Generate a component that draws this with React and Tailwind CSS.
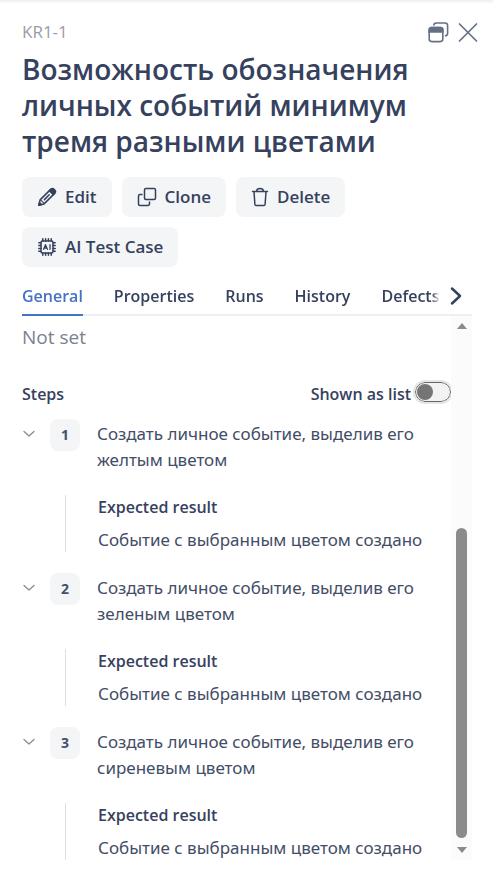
import React from "react";

const steps = [
  { id: 1, text: "Создать личное событие, выделив его желтым цветом" },
  { id: 2, text: "Создать личное событие, выделив его зеленым цветом" },
  { id: 3, text: "Создать личное событие, выделив его сиреневым цветом" },
];

const tabs = ["General", "Properties", "Runs", "History", "Defects"];

function RestoreIcon() {
  return (
    <svg width="22" height="22" viewBox="0 0 22 22" fill="none" stroke="#657086" strokeWidth="1.600" aria-hidden="true">
      <path d="M5.800 4.600c0-1.600.9-2.600 2.500-2.600h8.700a2.600 2.600 0 0 1 2.600 2.600v7.800a2.400 2.400 0 0 1-2.400 2.400h-.4" />
      <rect x="1.200" y="6.600" width="13.600" height="14" rx="2.500" />
      <path d="M1.200 11V9.100a2.500 2.500 0 0 1 2.500-2.500h8.600a2.500 2.500 0 0 1 2.500 2.500V11z" fill="#657086" />
    </svg>
  );
}

function CloseIcon() {
  return (
    <svg width="20" height="20" viewBox="0 0 20 20" fill="none" stroke="#657086" strokeWidth="1.700" strokeLinecap="round" aria-hidden="true">
      <path d="M1.500 2l17 17M18.500 2l-17 17" />
    </svg>
  );
}

function PencilIcon() {
  return (
    <svg width="20" height="20" viewBox="0 0 20 20" fill="none" stroke="#36415e" strokeWidth="1.500" strokeLinejoin="round" strokeLinecap="round" aria-hidden="true">
      <path d="M1.800 18.200l1.300-5.300L13.400 2.600a2.200 2.200 0 0 1 3.100 0l.9.900a2.200 2.200 0 0 1 0 3.100L7.100 16.900z" />
      <path d="M12.300 3.700l1.900-1.700a2 2 0 0 1 2.600 0l1.200 1.200a2 2 0 0 1 0 2.600l-1.700 1.900z" fill="#36415e" />
      <path d="M7.400 12.600l4.800-4.800" strokeWidth="1.500" />
      <path d="M3.600 12.800l3.600 3.600" strokeWidth="1.100" />
      <path d="M1.800 18.200l.7-2.700 2 2z" fill="#36415e" />
    </svg>
  );
}

function CloneIcon() {
  return (
    <svg width="20" height="20" viewBox="0 0 20 20" fill="none" stroke="#36415e" strokeWidth="1.500" strokeLinejoin="round" aria-hidden="true">
      <rect x="7.500" y="1.500" width="11" height="11" rx="1.500" />
      <path d="M5.500 7.500h-2.500a1.500 1.500 0 0 0-1.500 1.500v8a1.500 1.500 0 0 0 1.500 1.500h8a1.500 1.500 0 0 0 1.500-1.500v-2.500" />
    </svg>
  );
}

function TrashIcon() {
  return (
    <svg width="18" height="20" viewBox="0 0 18 20" fill="none" stroke="#36415e" strokeWidth="1.500" strokeLinejoin="round" strokeLinecap="round" aria-hidden="true">
      <path d="M1.500 4.500h15M5.500 4.300c.2-1.800 1.300-2.800 3.500-2.800s3.300 1 3.500 2.800M3 4.700l.9 12.700c.1.700.5 1.100 1.100 1.100h8c.6 0 1-.4 1.100-1.100L15 4.700" />
    </svg>
  );
}

function ChipIcon() {
  return (
    <svg width="20" height="20" viewBox="0 0 20 20" fill="none" stroke="#36415e" strokeWidth="1.500" strokeLinecap="round" strokeLinejoin="round" aria-hidden="true">
      <rect x="4" y="4" width="12" height="12" rx="1.500" />
      <path d="M5.800 1.800V4M8.600 1.800V4M11.400 1.800V4M14.200 1.800V4M5.800 16v2.200M8.600 16v2.200M11.400 16v2.200M14.200 16v2.200M1.800 5.800H4M1.800 8.600H4M1.800 11.400H4M1.800 14.200H4M16 5.800h2.200M16 8.600h2.200M16 11.400h2.200M16 14.200h2.200" />
      <path d="M6.600 12.300l1.900-4.600 1.900 4.600M7.300 11h2.400M13 7.700v4.600" strokeWidth="1.300" />
    </svg>
  );
}

function ActionButton({ icon, children }) {
  return (
    <button
      type="button"
      className="flex h-10 items-center gap-2 rounded-lg bg-[#f3f5f7] px-[15px] text-[17px] font-semibold text-[#36415e]"
    >
      {icon}
      {children}
    </button>
  );
}

function Step({ id, text }) {
  return (
    <li className="pb-[21px]">
      <div className="flex items-start">
        <button type="button" aria-label={`Collapse step ${id}`} className="flex h-[30px] w-7 items-center">
          <svg width="14" height="8" viewBox="0 0 14 8" fill="none" stroke="#858d9b" strokeWidth="1.300" strokeLinecap="round" strokeLinejoin="round" aria-hidden="true">
            <path d="M2 1.500l5 4.500 5-4.500" />
          </svg>
        </button>
        <span className="flex h-8 w-[30px] items-center justify-center rounded-lg bg-[#f3f5f7] text-sm leading-5 font-bold text-[#465069]">
          {id}
        </span>
        <p className="ml-[17px] min-w-0 flex-1 pt-0.5 pr-4 font-['Noto_Sans',sans-serif] text-[17px] leading-[26px]">{text}</p>
      </div>
      <div className="mt-[22px] ml-[43px] border-l border-[#dcdfe4] pl-8">
        <h3 className="text-base leading-6 font-semibold text-[#36415e]">Expected result</h3>
        <p className="mt-2 font-['Noto_Sans',sans-serif] text-[17px] leading-[25px] whitespace-nowrap">Событие с выбранным цветом создано</p>
      </div>
    </li>
  );
}

export default function App() {
  return (
    <main className="flex h-screen flex-col overflow-hidden bg-white pb-3 pl-[22px] font-['Open_Sans','Noto_Sans',sans-serif] text-[#434d66]">
      <div className="-ml-[22px] h-1 shrink-0 bg-linear-to-b from-[#eeeeee] to-white" />
      <header className="shrink-0 pt-[17px] pr-[15px]">
        <div className="flex items-center justify-between">
          <span className="text-[17px] leading-[22px] text-[#979eaa]">KR1-1</span>
          <div className="flex items-center gap-2">
            <button type="button" aria-label="Open in window"><RestoreIcon /></button>
            <button type="button" aria-label="Close"><CloseIcon /></button>
          </div>
        </div>
        <h1 className="mt-2 max-w-[440px] text-[28px] leading-9 font-semibold text-[#36415e]">
          Возможность обозначения личных событий минимум тремя разными цветами
        </h1>
      </header>

      <div className="mt-[18px] flex shrink-0 flex-wrap gap-[10px] pr-[22px]">
        <ActionButton icon={<PencilIcon />}>Edit</ActionButton>
        <ActionButton icon={<CloneIcon />}>Clone</ActionButton>
        <ActionButton icon={<TrashIcon />}>Delete</ActionButton>
        <ActionButton icon={<ChipIcon />}>AI Test Case</ActionButton>
      </div>

      <nav className="mt-2 mr-[21px] flex h-[41px] shrink-0 border-b-2 border-[#eeeff1]">
        <div role="tablist" className="-mb-0.5 flex min-w-0 flex-1 gap-[31px] overflow-hidden mask-r-from-[calc(100%-8px)] mask-r-to-100%">
          {tabs.map((tab, i) => (
            <button
              key={tab}
              type="button"
              role="tab"
              aria-selected={i === 0}
              className={
                i === 0
                  ? "border-b-2 border-[#4472c4] pt-0.5 text-base font-semibold text-[#4472c4]"
                  : "border-b-2 border-transparent pt-0.5 text-base font-semibold text-[#36415e]"
              }
            >
              {tab}
            </button>
          ))}
        </div>
        <button type="button" aria-label="More tabs" className="flex w-8 items-center justify-center pt-0.5">
          <svg width="12" height="20" viewBox="0 0 12 20" fill="none" stroke="#36415e" strokeWidth="2.500" strokeLinecap="round" strokeLinejoin="round" aria-hidden="true">
            <path d="M2 2.500l8 7.500-8 7.500" />
          </svg>
        </button>
      </nav>

      <div className="mr-[21px] flex min-h-0 flex-1">
        <section className="min-w-0 flex-1 overflow-hidden">
          <p className="mt-2 text-[19px] leading-[26px] text-[#79828f]">Not set</p>
          <div className="mt-7 flex h-8 items-center justify-between text-base font-semibold text-[#36415e]">
            <h2>Steps</h2>
            <div className="flex items-center gap-1">
              <label htmlFor="shown-as-list">Shown as list</label>
              <input
                id="shown-as-list"
                type="checkbox"
                role="switch"
                className="mb-1 flex h-5 w-9 appearance-none items-center rounded-full border border-[#666666] bg-[#f2f2f2] pl-px outline-2 outline-[#e6e6e6] before:size-4 before:rounded-full before:bg-[#757575]"
              />
            </div>
          </div>
          <ol className="mt-[9px]">
            {steps.map((step) => (
              <Step key={step.id} id={step.id} text={step.text} />
            ))}
          </ol>
        </section>
        <div aria-hidden="true" className="flex w-[21px] flex-col items-center bg-[#fbfbfb] py-[7px]">
          <svg width="10" height="6" viewBox="0 0 10 6" fill="#8b8b8b"><path d="M5 0l5 6H0z" /></svg>
          <div className="flex min-h-0 w-[11px] flex-1 flex-col justify-end pb-[9px]">
            <div className="h-[61%] rounded-full bg-[#8b8b8b]" />
          </div>
          <svg width="10" height="6" viewBox="0 0 10 6" fill="#8b8b8b"><path d="M0 0h10L5 6z" /></svg>
        </div>
      </div>
    </main>
  );
}
